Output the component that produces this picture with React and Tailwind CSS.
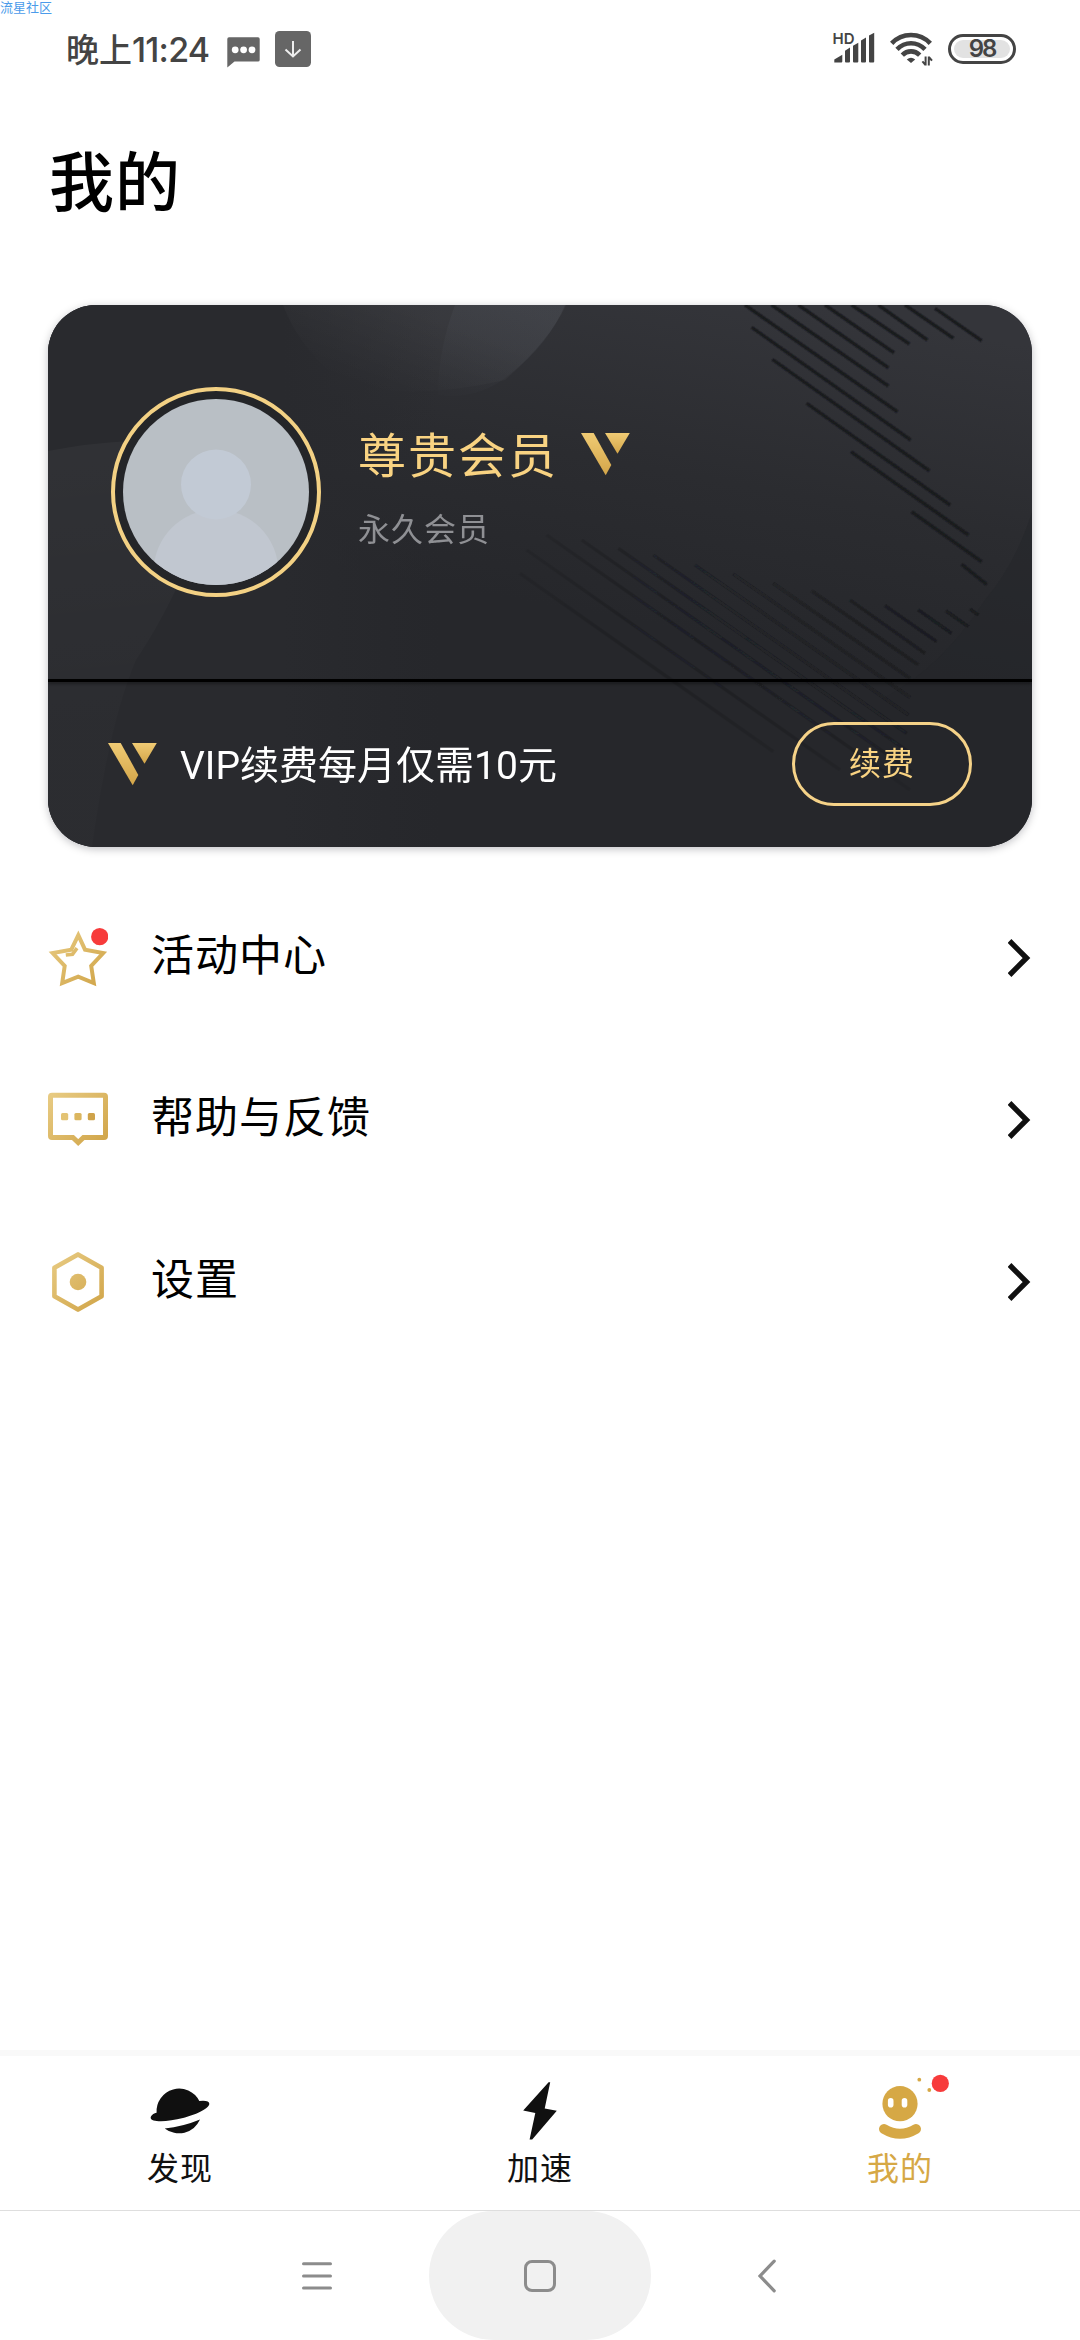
import React from "react"

const upperStripes = "M1185 55L1325 152M1095 45L1240 145M1015 45L1162 150M935 45L1108 162M855 45L1062 188M775 45L1045 233M695 45L1045 288M615 45L1072 365M635 112L1112 450M697 208L1168 542M800 340L1230 645M933 485L1285 735M1115 665L1325 815M1265 823L1340 883"
const lowerStripes = "M1290 957L1315 975M1218 963L1285 1010M1135 960L1235 1030M1035 947L1190 1055M930 930L1155 1090M815 903L1135 1125M700 880L1110 1165M580 852L1110 1222M465 825L1105 1275M340 795L1100 1330M235 775L1105 1385M125 750L1115 1445M20 735L1110 1500M-40 780L900 1440M-60 850L700 1385"

const CardBackground = () => (
  <svg className="absolute inset-0 w-full h-full" viewBox="48 305 984 542" fill="none">
    <defs>
      <linearGradient id="card-base" x1="800" y1="305" x2="740" y2="640" gradientUnits="userSpaceOnUse">
        <stop stopColor="#34353a" />
        <stop offset="0.55" stopColor="#2b2c30" />
        <stop offset="1" stopColor="#26272b" />
      </linearGradient>
      <linearGradient id="card-left" x1="48" y1="0" x2="440" y2="0" gradientUnits="userSpaceOnUse">
        <stop stopColor="#292a2e" />
        <stop offset="0.6" stopColor="#292a2e" />
        <stop offset="1" stopColor="#292a2e" stopOpacity="0" />
      </linearGradient>
      <linearGradient id="card-orb" x1="520" y1="305" x2="470" y2="405" gradientUnits="userSpaceOnUse">
        <stop stopColor="#8e9aac" stopOpacity="0.08" />
        <stop offset="1" stopColor="#8e9aac" stopOpacity="0.01" />
      </linearGradient>
      <linearGradient id="card-glow" x1="400" y1="305" x2="370" y2="390" gradientUnits="userSpaceOnUse">
        <stop stopColor="#fff" stopOpacity="0.04" />
        <stop offset="1" stopColor="#fff" stopOpacity="0" />
      </linearGradient>
      <linearGradient id="card-hill" x1="80" y1="440" x2="110" y2="720" gradientUnits="userSpaceOnUse">
        <stop stopColor="#fff" stopOpacity="0.035" />
        <stop offset="1" stopColor="#fff" stopOpacity="0.012" />
      </linearGradient>
      <linearGradient id="card-stripes" x1="0" y1="0" x2="1300" y2="0" gradientUnits="userSpaceOnUse">
        <stop stopColor="#17181b" stopOpacity="0.08" />
        <stop offset="0.5" stopColor="#17181b" stopOpacity="0.3" />
        <stop offset="1" stopColor="#17181b" stopOpacity="0.75" />
      </linearGradient>
      <linearGradient id="card-stripes-fade" x1="0" y1="1000" x2="0" y2="1480" gradientUnits="userSpaceOnUse">
        <stop stopColor="#fff" />
        <stop offset="1" stopColor="#fff" stopOpacity="0.1" />
      </linearGradient>
      <mask id="card-stripes-mask" maskUnits="userSpaceOnUse" x="-100" y="600" width="1600" height="1000">
        <rect x="-100" y="600" width="1600" height="1000" fill="url(#card-stripes-fade)" />
      </mask>
      <filter id="card-stripes-soft">
        <feGaussianBlur stdDeviation="1.8" />
      </filter>
    </defs>
    <rect x="48" y="305" width="984" height="542" fill="url(#card-base)" />
    <rect x="48" y="305" width="400" height="542" fill="url(#card-left)" />
    <path d="M283 305Q300 350 345 385Q420 400 505 380Q550 340 566 305Z" fill="url(#card-glow)" />
    <path d="M455 305Q438 350 438 395Q480 400 510 374Q548 345 565 305Z" fill="url(#card-orb)" />
    <path d="M48 451Q90 443 130 441L230 445Q190 580 136 660Q110 720 92 847H48Z" fill="url(#card-hill)" />
    <path d="M1032 512Q1015 565 985 600Q940 670 880 700V847H1032Z" fill="#242529" fillOpacity="0.5" />
    <g transform="translate(540 290) scale(0.3333)" filter="url(#card-stripes-soft)">
      <path d={upperStripes} stroke="#1a1b1f" strokeWidth="10" />
      <path d={lowerStripes} stroke="url(#card-stripes)" strokeWidth="10" mask="url(#card-stripes-mask)" />
    </g>
  </svg>
)

const VipLogo = ({ className }) => (
  <svg className={className} width="49" height="43" viewBox="0 0 49 43">
    <defs>
      <linearGradient id="vip-gold" x1="0" y1="0" x2="0" y2="1">
        <stop stopColor="#f0cb74" />
        <stop offset="1" stopColor="#d3a549" />
      </linearGradient>
    </defs>
    <path d="M0 0H12.7L30.3 32L24.7 42.3Z" fill="url(#vip-gold)" />
    <path d="M24 0H48.8L36.5 20.8Z" fill="url(#vip-gold)" />
  </svg>
)

const GoldGradient = () => (
  <svg className="absolute w-0 h-0">
    <defs>
      <linearGradient id="gold" x1="0" y1="0" x2="60" y2="60" gradientUnits="userSpaceOnUse">
        <stop stopColor="#e9cd86" />
        <stop offset="1" stopColor="#cfa244" />
      </linearGradient>
    </defs>
  </svg>
)

const StarIcon = () => (
  <svg width="60" height="60" viewBox="0 0 60 60" fill="none">
    <path d="M30.3 7.2L37 21.6L55.2 25L43.2 38L45.8 55L30.2 48.7L14.2 55L16.7 38L4.6 25L23.3 21.6Z" stroke="url(#gold)" strokeWidth="4" />
    <path d="M17.8 27L24.5 26.2L29 20.2" stroke="url(#gold)" strokeWidth="3.6" />
    <circle cx="51.7" cy="8.7" r="8.6" fill="#f73b3b" />
  </svg>
)

const FeedbackIcon = () => (
  <svg width="60" height="60" viewBox="0 0 60 60" fill="none">
    <path d="M4 5.2H56Q57.5 5.2 57.5 6.7V46Q57.5 47.5 56 47.5H35.5L30.2 52.6L24.9 47.5H4Q2.5 47.5 2.5 46V6.7Q2.5 5.2 4 5.2Z" stroke="url(#gold)" strokeWidth="5" />
    <rect x="13" y="23" width="7.2" height="7.2" rx="1.5" fill="#e3c374" />
    <rect x="26.4" y="23" width="7.2" height="7.2" rx="1.5" fill="#dbb65f" />
    <rect x="39.8" y="23" width="7.2" height="7.2" rx="1.5" fill="#cfa34a" />
  </svg>
)

const SettingsIcon = () => (
  <svg width="60" height="60" viewBox="0 0 60 60" fill="none">
    <path d="M30 2.4L53.6 15.8V44.2L30 57.6L6.4 44.2V15.8Z" stroke="url(#gold)" strokeWidth="4.6" strokeLinejoin="round" />
    <circle cx="30" cy="30" r="8.3" fill="url(#gold)" />
  </svg>
)

const PlanetIcon = () => (
  <svg width="60" height="60" viewBox="0 0 60 60" fill="#101010">
    <path d="M6.6 32.8A22.6 22.6 0 0 1 49.3 21Q59.3 20 59.3 23.8C59.3 29 44 35.3 33 38C18 42 1 42.5.7 38C.7 35.5 3.4 33.6 6.6 32.8Z" />
    <path d="M14.7 48.4Q33 46.8 50 39.6A23 23 0 0 1 14.7 48.4Z" />
  </svg>
)

const BoltIcon = () => (
  <svg width="60" height="60" viewBox="0 0 60 60" fill="#101010">
    <path d="M38.6 2.2H40.2L34.7 28.4L46.8 30.8L22.2 59.5H19.6L25.3 33L13.2 30.4Z" />
  </svg>
)

const FaceIcon = () => (
  <svg className="overflow-visible" width="60" height="60" viewBox="0 0 60 60" fill="#d6a845">
    <circle cx="30" cy="23.7" r="17.6" />
    <rect x="17.9" y="18" width="5.6" height="9.6" rx="2.8" fill="#fff" />
    <rect x="31.7" y="18" width="5.6" height="9.6" rx="2.8" fill="#fff" />
    <path d="M14 49Q30 58.5 46 49" fill="none" stroke="#d6a845" strokeWidth="10" strokeLinecap="round" />
    <circle cx="49.3" cy="-0.3" r="1.9" />
    <circle cx="59.3" cy="10" r="1.9" />
    <circle cx="70.3" cy="3.4" r="8.6" fill="#f73b3b" />
  </svg>
)

const SignalIcon = () => (
  <svg className="overflow-visible" width="42" height="34" viewBox="0 0 42 34" fill="#444">
    <text x="-0.5" y="11.6" fontSize="15" fontWeight="600" fontFamily="Inter, sans-serif">HD</text>
    <path d="M1.3 30.6V27.5L9.3 22.7V29.6Q9.3 30.6 8.3 30.6ZM12 18.8L17 15.5V29.6Q17 30.6 16 30.6H13Q12 30.6 12 29.6ZM20 13.8L25.3 10.8V29.6Q25.3 30.6 24.3 30.6H21Q20 30.6 20 29.6ZM28 8.5L33 5.5V29.6Q33 30.6 32 30.6H29Q28 30.6 28 29.6ZM36 3.6L41.2 0.8V29.6Q41.2 30.6 40.2 30.6H37Q36 30.6 36 29.6Z" />
  </svg>
)

const WifiIcon = () => (
  <svg width="43" height="34" viewBox="0 0 43 34" fill="none" stroke="#444" strokeWidth="4.6">
    <path d="M1.7 11.4Q9.5 3 21 3T40.3 11.4" />
    <path d="M7 17.4Q13 11.2 21 11.2T35 17.4" />
    <path d="M12.3 23.2Q16 19.4 21 19.4T29.7 23.2" />
    <path d="M21 31L16.8 27.6Q21 24 25.2 27.6Z" fill="#444" stroke="none" />
    <path d="M35.6 24.5V33.5M35.6 33L32.4 29.4M38.8 33.5V24.5M38.8 25L42 28.6" strokeWidth="2" />
  </svg>
)

const menuItems = [
  { label: "活动中心", Icon: StarIcon },
  { label: "帮助与反馈", Icon: FeedbackIcon },
  { label: "设置", Icon: SettingsIcon },
]

const tabs = [
  { label: "发现", Icon: PlanetIcon },
  { label: "加速", Icon: BoltIcon },
  { label: "我的", Icon: FaceIcon, active: true },
]

const StatusBar = () => (
  <header className="flex items-center h-[98px] pl-[66px] pr-16 text-[#444]">
    <span className="flex items-center w-[144px] font-medium leading-none whitespace-nowrap">
      <span className="text-[33px] -mt-0.5">晚上</span>
      <span className="font-['Inter'] text-[34px] tracking-[-0.8px] mt-0.5">11:24</span>
    </span>
    <svg className="ml-[17px] mt-1.5" width="33" height="31" viewBox="0 0 33 31">
      <path d="M2 0.3H31Q32.7 0.3 32.7 2V23Q32.7 24.6 31 24.6H7.5L0.3 30.6V2Q0.3 0.3 2 0.3Z" fill="#666" />
      <circle cx="8.2" cy="12.8" r="3.4" fill="#fff" />
      <circle cx="16.6" cy="12.8" r="3.4" fill="#fff" />
      <circle cx="25" cy="12.8" r="3.4" fill="#fff" />
    </svg>
    <svg className="ml-[15px]" width="36" height="36" viewBox="0 0 36 36" fill="none">
      <rect width="36" height="36" rx="4.5" fill="#666" />
      <path d="M18 10V25.5M10.5 18.5L18 25.5L25.5 18.5" stroke="#eee" strokeWidth="2" />
    </svg>
    <div className="flex items-center ml-auto">
      <SignalIcon />
      <span className="ml-[15px]"><WifiIcon /></span>
      <span className="flex items-center justify-center ml-[15px] w-[68px] h-[30px] border-[3px] border-[#444] rounded-full p-[3px]">
        <span className="flex items-center justify-center w-full h-full rounded-full bg-[#e2e2e2] font-['Inter'] font-semibold text-[24px] leading-none tracking-[-2px]">98</span>
      </span>
    </div>
  </header>
)

const MemberCard = () => (
  <section className="relative mx-12 h-[542px] rounded-[48px] overflow-hidden bg-[#27282c]">
    <CardBackground />
    <div className="relative flex flex-col h-full">
      <div className="flex items-start h-[374px] pl-[63px] pt-[82px]">
        <div className="w-[210px] h-[210px] rounded-full border-4 border-[#f3d184] bg-[#242528] p-2">
          <svg className="w-full h-full rounded-full" viewBox="123 399 186 186">
            <rect x="123" y="399" width="186" height="186" fill="#b9bfc5" />
            <circle cx="216" cy="572" r="62.5" fill="#c1c7d0" />
            <circle cx="216" cy="484.5" r="35" fill="#c2cad5" />
          </svg>
        </div>
        <div className="ml-[37px] pt-[30px]">
          <div className="flex items-center h-[70px]">
            <span className="text-[48px] leading-none tracking-[2px] text-[#f9d382]">尊贵会员</span>
            <VipLogo className="ml-[23px] mt-1" />
          </div>
          <p className="mt-[16px] text-[32px] leading-[48px] tracking-[1px] text-[#8f9094]">永久会员</p>
        </div>
      </div>
      <div className="h-[3px] bg-black shadow-[0_2px_3px_rgba(0,0,0,0.35)]" />
      <div className="flex items-center flex-1 pl-[60px] pr-[60px] pb-px">
        <VipLogo />
        <span className="ml-[23px] mt-[5px] font-['Roboto','Noto_Sans_CJK_SC',sans-serif] text-[39px] leading-none text-white whitespace-nowrap">VIP续费每月仅需10元</span>
        <button className="ml-auto w-[180px] h-[84px] pb-[6px] border-[3px] border-[#f5d288] rounded-full text-[32px] leading-none tracking-[1px] text-[#f9d382]">续费</button>
      </div>
    </div>
  </section>
)

const App = () => (
  <div className="relative flex flex-col w-[1080px] h-[2340px] bg-white text-black font-['Noto_Sans_CJK_SC',sans-serif] overflow-hidden" lang="zh-CN">
    <GoldGradient />
    <span className="absolute left-0 top-0 text-[13px] leading-[14px] text-[#4b9bea] whitespace-nowrap">流星社区</span>
    <StatusBar />
    <h1 className="h-[207px] pl-[49px] pt-[32px] text-[65px] leading-[96px] font-medium tracking-[1px]">我的</h1>
    <div className="relative">
      <div className="absolute inset-x-12 inset-y-0 rounded-[48px] shadow-[0_2px_8px_rgba(0,0,20,0.25)]" />
      <MemberCard />
    </div>
    <ul className="mt-[30px] mx-12">
      {menuItems.map(({ label, Icon }) => (
        <li key={label} className="flex items-center h-[162px]">
          <Icon />
          <span className="ml-[43px] pb-3 text-[43px] leading-[60px] tracking-[1px]">{label}</span>
          <svg className="ml-auto" width="24" height="40" viewBox="0 0 24 40" fill="none">
            <path d="M1.5 3L18.5 20L1.5 37" stroke="#101010" strokeWidth="5.4" />
          </svg>
        </li>
      ))}
    </ul>
    <nav className="mt-auto flex h-[161px] border-t-[6px] border-t-[#f9f9f9] border-b border-b-[#dedede]">
      {tabs.map(({ label, Icon, active }) => (
        <div key={label} className="flex flex-col items-center flex-1 pt-6">
          <Icon />
          <span className={`mt-[2px] text-[32px] leading-[48px] tracking-[1px] ${active ? "text-[#d6a845]" : "text-[#101010]"}`}>{label}</span>
        </div>
      ))}
    </nav>
    <div className="flex justify-center h-[129px]">
      <div className="flex items-center justify-center w-[222px] pr-0.5">
        <svg width="30" height="30" viewBox="0 0 30 30" stroke="#8c8c8c" strokeWidth="3" strokeLinecap="round">
          <path d="M1.5 2.8H28.5M1.5 15H28.5M1.5 27H28.5" />
        </svg>
      </div>
      <div className="flex items-center justify-center w-[222px] rounded-full bg-[#f1f1f1]">
        <span className="w-8 h-8 border-[3px] border-[#8c8c8c] rounded-[8px]" />
      </div>
      <div className="flex items-center justify-center w-[222px] pl-2.5">
        <svg width="18" height="34" viewBox="0 0 18 34" fill="none">
          <path d="M16.2 2.2L2 17L16.2 31.8" stroke="#8c8c8c" strokeWidth="3.2" strokeLinecap="round" />
        </svg>
      </div>
    </div>
  </div>
)

export default App
